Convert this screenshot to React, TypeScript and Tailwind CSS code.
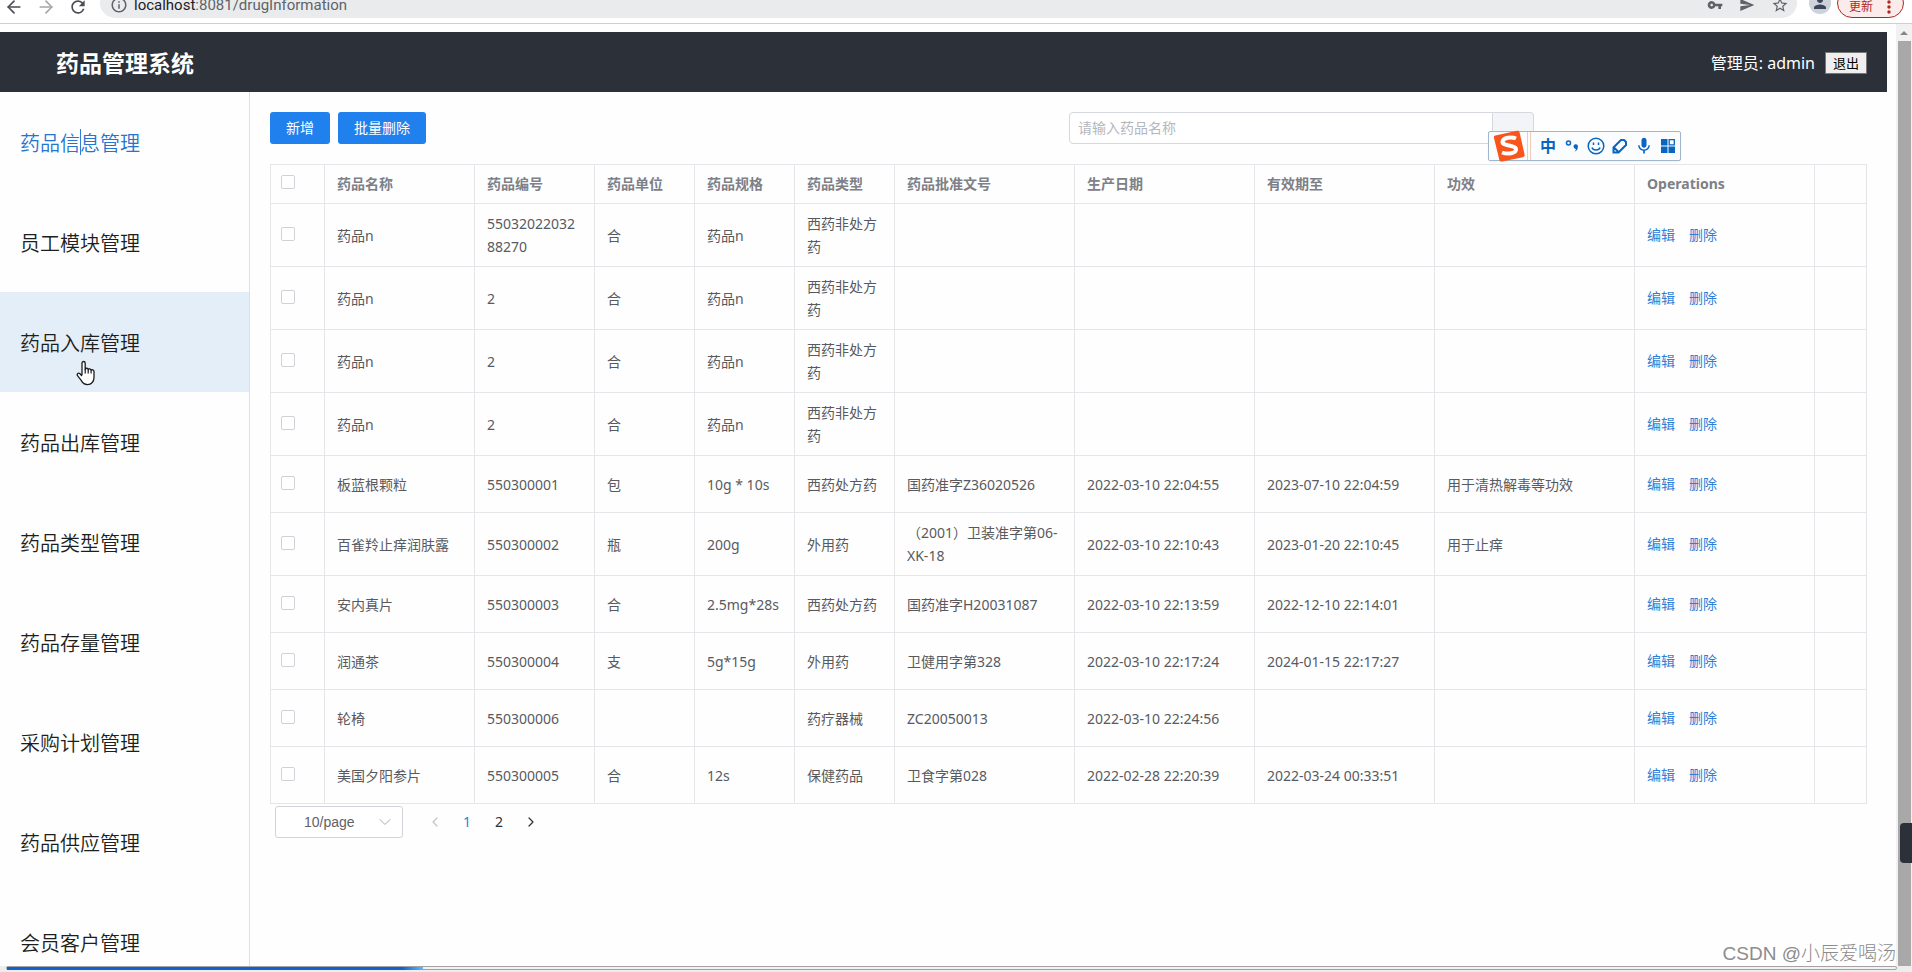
import React, { useState } from 'react';
import { ArrowLeft, ArrowRight, ChevronDown, ChevronLeft, ChevronRight } from 'lucide-react';
import { MdInfoOutline, MdMic, MdMoreVert, MdPerson, MdRefresh, MdSend, MdStarBorder, MdVpnKey } from 'react-icons/md';

interface Drug {
  name: string;
  code: string;
  unit: string;
  spec: string;
  type: string;
  approval: string;
  producedAt: string;
  expiresAt: string;
  effect: string;
}

const menuItems = [
  '药品信息管理',
  '员工模块管理',
  '药品入库管理',
  '药品出库管理',
  '药品类型管理',
  '药品存量管理',
  '采购计划管理',
  '药品供应管理',
  '会员客户管理',
];

const columns: { key: keyof Drug; title: string; width: string }[] = [
  { key: 'name', title: '药品名称', width: 'w-[150px]' },
  { key: 'code', title: '药品编号', width: 'w-[120px]' },
  { key: 'unit', title: '药品单位', width: 'w-[100px]' },
  { key: 'spec', title: '药品规格', width: 'w-[100px]' },
  { key: 'type', title: '药品类型', width: 'w-[100px]' },
  { key: 'approval', title: '药品批准文号', width: 'w-[180px]' },
  { key: 'producedAt', title: '生产日期', width: 'w-[180px]' },
  { key: 'expiresAt', title: '有效期至', width: 'w-[180px]' },
  { key: 'effect', title: '功效', width: 'w-[200px]' },
];

const draft = { name: '药品n', unit: '合', spec: '药品n', type: '西药非处方药', approval: '', producedAt: '', expiresAt: '', effect: '' };

const drugs: Drug[] = [
  { ...draft, code: '5503202203288270' },
  { ...draft, code: '2' },
  { ...draft, code: '2' },
  { ...draft, code: '2' },
  { name: '板蓝根颗粒', code: '550300001', unit: '包', spec: '10g * 10s', type: '西药处方药', approval: '国药准字Z36020526', producedAt: '2022-03-10 22:04:55', expiresAt: '2023-07-10 22:04:59', effect: '用于清热解毒等功效' },
  { name: '百雀羚止痒润肤露', code: '550300002', unit: '瓶', spec: '200g', type: '外用药', approval: '（2001）卫装准字第06-XK-18', producedAt: '2022-03-10 22:10:43', expiresAt: '2023-01-20 22:10:45', effect: '用于止痒' },
  { name: '安内真片', code: '550300003', unit: '合', spec: '2.5mg*28s', type: '西药处方药', approval: '国药准字H20031087', producedAt: '2022-03-10 22:13:59', expiresAt: '2022-12-10 22:14:01', effect: '' },
  { name: '润通茶', code: '550300004', unit: '支', spec: '5g*15g', type: '外用药', approval: '卫健用字第328', producedAt: '2022-03-10 22:17:24', expiresAt: '2024-01-15 22:17:27', effect: '' },
  { name: '轮椅', code: '550300006', unit: '', spec: '', type: '药疗器械', approval: 'ZC20050013', producedAt: '2022-03-10 22:24:56', expiresAt: '', effect: '' },
  { name: '美国夕阳参片', code: '550300005', unit: '合', spec: '12s', type: '保健药品', approval: '卫食字第028', producedAt: '2022-02-28 22:20:39', expiresAt: '2022-03-24 00:33:51', effect: '' },
];

const cell = 'border-r border-b border-[#e4e6e9]';
const checkbox = 'block size-3.5 appearance-none rounded-xs border border-[#cfd2d8] bg-white checked:bg-[#1f80ee]';

const BrowserBar: React.FC = () => (
  <div className="flex h-6 shrink-0 items-start overflow-hidden border-b border-[#cfcfcf] bg-white text-[#5f6368]">
    <div className="-mt-1 flex w-full items-center">
      <div className="flex w-[100px] shrink-0 items-center gap-3 pl-1">
        <button aria-label="后退"><ArrowLeft className="size-5 text-[#4a4d51]" /></button>
        <button aria-label="前进"><ArrowRight className="size-5 text-[#a5a7aa]" /></button>
        <button aria-label="刷新"><MdRefresh className="size-5 text-[#4a4d51]" /></button>
      </div>
      <div className="-mt-2 flex h-[30px] flex-1 items-center rounded-full bg-[#e9ebed] pr-2 pl-2.5">
        <MdInfoOutline className="mt-1 size-4.5" />
        <span className="mt-1 ml-1.5 flex-1 font-[Roboto,sans-serif] text-[15px]">
          <span className="text-[#202124]">localhost</span>:8081/drugInformation
        </span>
        <div className="mt-1 flex items-center gap-4">
          <MdVpnKey className="size-4" />
          <MdSend className="size-4" />
          <MdStarBorder className="size-4.5" />
        </div>
      </div>
      <span className="-mt-2 ml-3 flex size-[22px] items-center justify-center rounded-full bg-[#cdd1da]">
        <MdPerson className="size-4.5 text-[#3c4658]" />
      </span>
      <button className="-mt-2 mr-2 ml-1.5 flex h-[30px] w-[67px] items-center justify-end rounded-full border border-[#b3261e] bg-[#fbeceb] pt-2 pr-1 text-xs text-[#b3261e]">
        更新
        <MdMoreVert className="ml-1.5 size-5" />
      </button>
    </div>
  </div>
);

const HandCursor: React.FC = () => (
  <svg viewBox="0 0 20 26" className="pointer-events-none absolute top-[68px] left-[76px] h-[26px] w-5">
    <path
      d="M6 15V3.200C6 .9 9.200.9 9.200 3.200V9.500c.3-1.800 3-1.600 3 .2 .4-1.300 2.900-1 2.900.7 .5-1.100 2.900-.7 2.900 1v6c0 4-2.500 7.200-6.500 7.200-3.500 0-5-1.800-6.300-4.200L1.500 15.700c-1-2 1-3.300 2.500-2L6 16"
      fill="#fff"
      stroke="#1c1c1c"
      strokeWidth="1.300"
      strokeLinejoin="round"
    />
    <path d="M9.200 9v4.500M12.200 10v3.500M15.100 10.500v3" fill="none" stroke="#1c1c1c" strokeWidth="1.200" />
  </svg>
);

const ImeToolbar: React.FC = () => (
  <div className="absolute top-[19px] left-[419px] z-10 flex h-[30px] w-[193px] items-center rounded-xs border border-[#9fb6cd] bg-[#fafcfe] text-[#0a64c2] shadow-xs">
    <svg viewBox="0 0 32 32" className="ml-1 size-8">
      <path d="M2.500 5.500 24 .8c1.500-.3 2.300.3 2.600 1.700l5 22c.3 1.500-.3 2.400-1.800 2.700L9 31.500c-1.500.3-2.400-.3-2.700-1.700L1 8c-.3-1.400.1-2.200 1.500-2.500Z" fill="#f8541c" />
      <path d="M23 8.500c-4.500-2-13-1-13.500 3.200-.4 4.800 13 2.600 13.500 7.300.4 4.800-9 5.500-14 3.500" fill="none" stroke="#fff" strokeWidth="4" />
    </svg>
    <div className="ml-0.5 h-full w-1 border-x border-[#f5c9b8]" />
    <div className="flex flex-1 items-center justify-end">
      <span className="w-6 text-center text-base font-bold">中</span>
      <span className="flex w-6 justify-center">
        <svg viewBox="0 0 14 18" className="h-4.5 w-3.5">
          <circle cx="3.500" cy="6" r="2" fill="none" stroke="currentColor" strokeWidth="1.500" />
          <path d="M8.500 9a2.200 2.200 0 1 1 4.400.8c0 2.700-1.500 4.200-3.400 4.700 1-1 1.500-1.900 1.500-2.600C9.500 11.800 8.500 10.700 8.500 9Z" fill="currentColor" />
        </svg>
      </span>
      <span className="flex w-6 justify-center">
        <svg viewBox="0 0 18 18" className="size-4.5" fill="none" stroke="currentColor" strokeWidth="1.500">
          <circle cx="9" cy="9" r="7.800" />
          <path d="M6.500 5.500v2.500M11.500 5.500v2.500M5 10.500c1 3.300 7 3.300 8 0" />
        </svg>
      </span>
      <span className="flex w-6 justify-center">
        <svg viewBox="0 0 16 16" className="size-4" fill="none" stroke="currentColor" strokeWidth="2">
          <path d="M1.500 14.500v-5L9 2h3l2 2v3l-7.500 7.500ZM2 9.500l4.500 4.500" />
        </svg>
      </span>
      <span className="flex w-6 justify-center"><MdMic className="size-5" /></span>
      <span className="flex w-6 justify-center">
        <svg viewBox="0 0 14 14" className="size-3.5" fill="currentColor">
          <path d="M0 0h6.500v6.500H0zM0 7.500h6.500V14H0zM7.500 7.500H14V14H7.500z" />
          <path d="M8.200.7h5.100v5.100H8.200z" fill="none" stroke="currentColor" strokeWidth="1.300" />
        </svg>
      </span>
    </div>
  </div>
);

const DrugTable: React.FC = () => (
  <table className="mt-5 w-full table-fixed border-separate border-spacing-0 border-t border-l border-[#e4e6e9] text-left text-sm/[23px] text-[#585a5f]">
    <thead>
      <tr className="h-[39px] text-[#7d8087]">
        <th className={`${cell} w-[54px] pb-1 pl-2.5`}>
          <input type="checkbox" aria-label="全选" className={checkbox} />
        </th>
        {columns.map((col) => (
          <th key={col.key} className={`${cell} ${col.width} px-3 pb-0.5 font-bold`}>{col.title}</th>
        ))}
        <th className={`${cell} w-[180px] px-3 pb-0.5 font-bold`}>Operations</th>
        <th className={cell}></th>
      </tr>
    </thead>
    <tbody>
      {drugs.map((drug, i) => (
        <tr key={i} className="h-[57px]">
          <td className={`${cell} pb-0.5 pl-2.5`}>
            <input type="checkbox" aria-label={drug.name} className={checkbox} />
          </td>
          {columns.map((col) => (
            <td key={col.key} className={`${cell} px-3 py-2 break-all`}>{drug[col.key]}</td>
          ))}
          <td className={`${cell} px-3 pb-0.5 text-[#2f7fd6]`}>
            <div className="flex gap-3.5">
              <button>编辑</button>
              <button>删除</button>
            </div>
          </td>
          <td className={cell}></td>
        </tr>
      ))}
    </tbody>
  </table>
);

const App: React.FC = () => {
  const [active, setActive] = useState(0);
  const [keyword, setKeyword] = useState('');

  return (
    <div className="relative flex h-screen flex-col overflow-hidden bg-[#fefefe] font-['Noto_Sans','Noto_Sans_CJK_SC',sans-serif]">
      <BrowserBar />
      <div className="flex min-h-0 flex-1">
        <div className="flex min-w-0 flex-1 flex-col pt-2 pr-[9px]">
          <header className="flex h-[60px] shrink-0 items-center justify-between bg-[#2c3038] pt-0.5 pr-5 pl-14 text-white">
            <h1 className="text-[23px] font-bold">药品管理系统</h1>
            <div className="flex items-center gap-2.5 text-base">
              管理员: admin
              <button className="h-[22px] w-[42px] border border-[#767676] bg-[#efefef] text-[13px]/5 text-black">退出</button>
            </div>
          </header>
          <div className="flex min-h-0 flex-1">
            <nav className="w-[250px] shrink-0 overflow-hidden border-r border-[#dcdfe6]">
              {menuItems.map((item, i) => (
                <a
                  key={item}
                  href="#"
                  onClick={() => setActive(i)}
                  className={`relative flex h-[100px] items-center px-5 pt-px font-['Noto_Sans_CJK_SC',sans-serif] text-xl font-[350] ${i === 2 ? 'bg-[#e4eef9]' : ''} ${active === i ? 'text-[#2474d0]' : 'text-[#1c1e20]'}`}
                >
                  {item}
                  {i === 0 && <span className="absolute top-[37px] left-20 h-[26px] w-px bg-[#2f7fd6]" />}
                  {i === 2 && <HandCursor />}
                </a>
              ))}
            </nav>
            <main className="min-w-0 flex-1 p-5">
              <div className="flex items-center">
                <button className="h-8 w-[60px] rounded-[3px] bg-[#1f80ee] text-sm text-white">新增</button>
                <button className="ml-2 h-8 w-22 rounded-[3px] bg-[#1f80ee] text-sm text-white">批量删除</button>
                <div className="relative ml-auto mr-[333px] flex h-8 w-[465px]">
                  <input
                    value={keyword}
                    onChange={(e) => setKeyword(e.target.value)}
                    placeholder="请输入药品名称"
                    aria-label="药品名称"
                    className="min-w-0 flex-1 rounded-l-sm border border-[#d5d8de] bg-white px-2 text-sm placeholder:text-[#b4b7bd]"
                  />
                  <button aria-label="搜索" className="w-[41px] rounded-r-sm border border-l-0 border-[#d5d8de] bg-[#f3f4f8]" />
                  <ImeToolbar />
                </div>
              </div>
              <DrugTable />
              <div className="flex items-center pt-0.5 pl-[5px] text-sm text-[#303133]">
                <div className="relative">
                  <select aria-label="每页条数" className="h-8 w-32 appearance-none rounded-[3px] border border-[#d0d3d9] bg-white pl-7 font-['Liberation_Sans',sans-serif] text-[#606266]">
                    <option>10/page</option>
                  </select>
                  <ChevronDown className="pointer-events-none absolute top-1.5 right-2 size-5 text-[#a8abb2]" strokeWidth={1.2} />
                </div>
                <div className="ml-4 flex">
                  <button aria-label="上一页" className="flex size-8 items-center justify-center text-[#c0c4cc]"><ChevronLeft className="size-4" strokeWidth={1.8} /></button>
                  <button className="size-8 text-[#2f7fd6]">1</button>
                  <button className="size-8">2</button>
                  <button aria-label="下一页" className="flex size-8 items-center justify-center"><ChevronRight className="size-4" strokeWidth={1.8} /></button>
                </div>
              </div>
            </main>
          </div>
        </div>
        <div className="flex w-4 shrink-0 flex-col items-center bg-[#f1f1f1]">
          <div className="flex h-[17px] items-center">
            <div className="border-x-4 border-b-4 border-x-transparent border-b-[#858585]" />
          </div>
          <div className="w-[13px] flex-1 bg-[#a8a8a8]" />
        </div>
      </div>

      <div className="absolute right-0 bottom-[109px] h-10 w-3 rounded-l-sm bg-[#2c3038]" />
      <div className="absolute right-4 bottom-1 font-['Liberation_Sans','Noto_Sans_CJK_SC',sans-serif] text-[19px]/7 font-light text-[#8c8c8c]">
        CSDN @小辰爱喝汤
      </div>
      <div className="absolute inset-x-0 bottom-0 h-1.5 bg-[#ededed]">
        <div role="progressbar" aria-label="播放进度" aria-valuenow={22} className="mr-[15px] ml-1.5 h-1 rounded-xs border border-[#a3a3a3] bg-[#f2f2f2]">
          <div className="h-[3px] w-[22%] bg-linear-to-r from-[#0f62d0] from-95% to-[#5cb8ff]" />
        </div>
      </div>
    </div>
  );
};

export default App;
